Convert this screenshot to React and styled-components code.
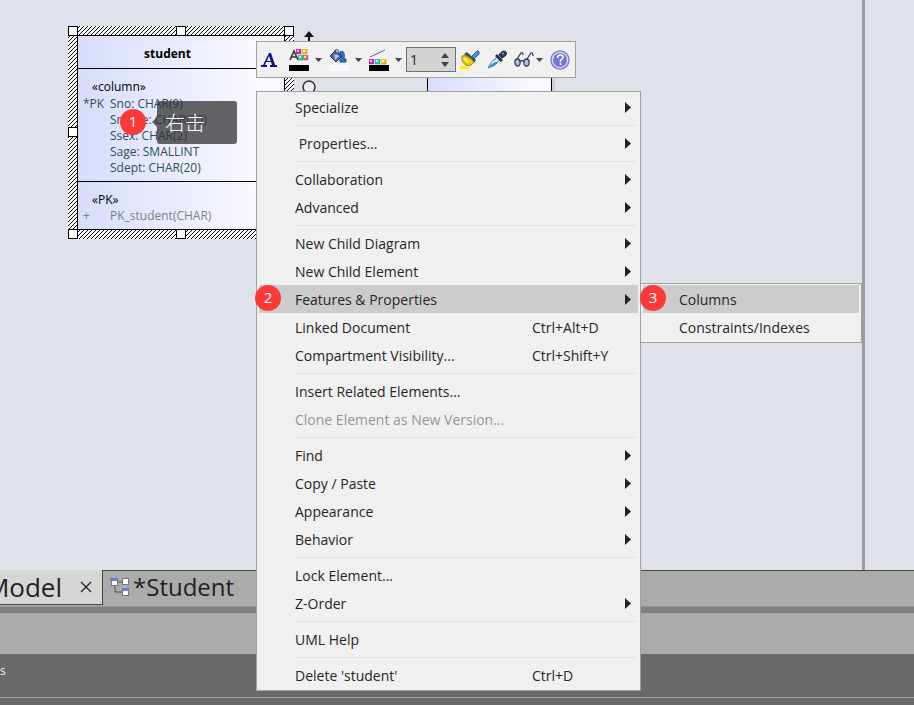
import React from "react";
import styled, { createGlobalStyle } from "styled-components";

const Global = createGlobalStyle`
  *, *::before, *::after { box-sizing: border-box; }
  html, body { margin: 0; }
  body { background: #6a6a6a; color: #222; font: 14px/20px "Open Sans", "Noto Sans", "Noto Sans CJK SC", sans-serif; }
  button, input { font: inherit; color: inherit; margin: 0; padding: 0; border: 0; background: none; }
  ul { margin: 0; padding: 0; list-style: none; }
`;

const Shell = styled.div`
  position: relative;
  min-height: 100vh;
  display: flex;
  flex-direction: column;
  overflow: hidden;
`;

const Workspace = styled.main`
  position: relative;
  flex: 1;
  display: grid;
  grid-template-columns: 1fr 3px 49px;
  background: #dfe2eb;
`;
const Splitter = styled.div`
  grid-column: 2;
  background: #9e9e9e;
`;

/* Diagram nodes */
const hatch = `url("data:image/svg+xml,%3Csvg xmlns='http://www.w3.org/2000/svg' width='4' height='4' shape-rendering='crispEdges'%3E%3Crect width='4' height='4' fill='%23fff'/%3E%3Cpath d='M3 0h1v1h-1zM2 1h1v1h-1zM1 2h1v1h-1zM0 3h1v1h-1z' fill='%23000'/%3E%3C/svg%3E")`;

const Selection = styled.section`
  position: absolute;
  left: 68px;
  top: 26px;
  width: 226px;
  padding: 9px;
  background: ${hatch};
`;
const Handle = styled.span`
  position: absolute;
  left: ${(p) => p.$x};
  top: ${(p) => p.$y};
  width: 10px;
  height: 10px;
  border: 1px solid #000;
  background: #fff;
`;
const Entity = styled.article`
  border: 1px solid #000;
  background: linear-gradient(90deg, #d8dcfb, #f8f8ff 85%);
  font-size: 12px;
  line-height: 16px;
  color: #2f4f4f;
`;
const EntityName = styled.h1`
  margin: 0;
  padding: 10px 27px 6px 0;
  font-size: 12px;
  line-height: 16px;
  text-align: center;
  color: #000;
`;
const Compartment = styled.section`
  border-top: 1px solid #000;
  padding: ${(p) => (p.$compact ? "9px 0 5px" : "9px 0 5px")};
`;
const Stereotype = styled.h2`
  margin: 0;
  padding-left: 14px;
  font-size: 12px;
  font-weight: 400;
  line-height: ${(p) => (p.$tall ? 18 : 17)}px;
  color: #000;
`;
const Member = styled.li`
  display: grid;
  grid-template-columns: 27px 1fr;
  padding-left: 5px;
  color: ${(p) => (p.$muted ? "#808080" : "inherit")};
`;
const NeighbourEntity = styled.div`
  position: absolute;
  left: 427px;
  top: 52px;
  width: 125px;
  height: 60px;
  border: 1px solid #000;
  background: linear-gradient(90deg, #d8dcfb, #f8f8ff 85%);
  box-shadow: 3px 3px 1px #cdd0da;
`;
const QuickLinks = styled.svg`
  position: absolute;
  left: 300px;
  top: 28px;
`;

/* Floating toolbar */
const Toolbar = styled.div`
  position: absolute;
  left: 256px;
  top: 41px;
  width: 320px;
  height: 37px;
  padding: 0 4px;
  border: 1px solid #a0a0a0;
  background: #f0f0f0;
  display: flex;
  align-items: center;
`;
const ToolButton = styled.button`
  flex: none;
  display: flex;
  align-items: center;
  gap: ${(p) => p.$gap || 6}px;
  margin-right: ${(p) => p.$after || 7}px;
  &:last-child { margin-right: 0; }
`;
const Stepper = styled.div`
  flex: none;
  width: 50px;
  height: 25px;
  margin-right: 4px;
  padding-left: 3px;
  border: 1px solid #707070;
  background: #d4d4d4;
  display: flex;
`;
const StepInput = styled.input`
  width: 31px;
  min-width: 0;
  outline: 0;
`;
const StepButtons = styled.div`
  display: grid;
  gap: 3px;
  align-content: center;
`;
const StepButton = styled.button`
  display: block;
  height: 6px;
  svg { display: block; }
`;

/* Menus */
const Menu = styled.div`
  position: absolute;
  left: ${(p) => p.$x}px;
  top: ${(p) => p.$y}px;
  width: ${(p) => p.$w}px;
  padding: 1px 2px;
  border: 1px solid #a0a0a0;
  background: #f0f0f0;
`;
const MenuItem = styled.button`
  display: grid;
  grid-template-columns: 1fr ${(p) => (p.$sub ? "" : "93px 6px")};
  align-items: center;
  width: 100%;
  height: 28px;
  padding: 0 7px 0 36px;
  line-height: 22px;
  text-align: left;
  white-space: pre;
  background: ${(p) => (p.$active ? "#cccccc" : "transparent")};
  color: ${(p) => (p.disabled ? "#969696" : "#262626")};
  span { padding-top: 1px; }
`;
const Divider = styled.hr`
  height: 1px;
  margin: 4px 3px 3px 37px;
  border: 0;
  background: #e0e0e0;
`;

/* Annotations */
const Step = styled.span`
  position: absolute;
  left: ${(p) => p.$x}px;
  top: ${(p) => p.$y}px;
  width: 26px;
  height: 26px;
  border-radius: 50%;
  background: #fc3939;
  color: #fff;
  font-size: 15px;
  line-height: 24px;
  text-align: center;
`;
const Callout = styled.div`
  position: absolute;
  left: 157px;
  top: 101px;
  width: 80px;
  padding: 8px;
  border-radius: 3px;
  background: rgba(48, 48, 50, 0.74);
  color: #fff;
  font-family: "Noto Sans CJK SC", sans-serif;
  font-weight: 300;
  font-size: 20px;
  line-height: 27px;
  &::before {
    content: "";
    position: absolute;
    left: -5px;
    top: 16px;
    border: solid transparent;
    border-width: 5px 5px 5px 0;
    border-right-color: rgba(48, 48, 50, 0.74);
  }
`;

/* Lower panels */
const TabBar = styled.nav`
  display: flex;
  height: 37px;
  background: #ababab;
  border-bottom: 1px solid #979797;
  line-height: 32px;
`;
const CurrentTab = styled.div`
  display: flex;
  justify-content: flex-end;
  align-items: center;
  width: 103px;
  height: 35px;
  padding-right: 10px;
  overflow: hidden;
  border: solid #484848;
  border-width: 0 1px 1px 0;
  background: #d6d6d6;
  font-size: 26px;
`;
const TabLabel = styled.button`
  flex: none;
  display: flex;
  align-items: center;
  gap: 3px;
`;
const CloseButton = styled.button`
  display: flex;
  margin-left: 18px;
`;
const TabRest = styled.div`
  flex: 1;
  display: flex;
  align-items: flex-start;
  padding-left: 7px;
  border-top: 1px solid #484848;
  font-size: 24px;
`;
const Band = styled.div`
  height: ${(p) => p.$h}px;
  background: ${(p) => p.$bg};
`;
const StatusPane = styled.footer`
  height: 51px;
  padding-top: 7px;
  background: #6a6a6a;
  color: #f4f4f4;
  font-size: 12px;
`;
const StatusLine = styled.div`
  height: 37px;
  border-bottom: 1px solid #a0a0a0;
`;

const Caret = () => (
  <svg width="7" height="4"><path d="M0 0h7L3.5 4z" fill="#444" /></svg>
);
const SubmenuArrow = () => (
  <svg width="6" height="11"><path d="M0 0L6 5.500L0 11z" fill="#222" /></svg>
);

function Swatches({ x, y, row }) {
  const cells = row
    ? [[0, 0, "#e020b0"], [6, 0, "#20c8c8"], [12, 0, "#f0c818"]]
    : [[0, 0, "#e020b0"], [6, 0, "#f0c818"], [2, 6, "#20c8a8"], [7, 6, "#f06078"]];
  return cells.map(([dx, dy, c]) => (
    <g key={`${dx}-${dy}`}>
      <rect x={x + dx} y={y + dy} width="5" height="5" fill={c} />
      <rect x={x + dx + 1} y={y + dy + 1} width="2" height="2" fill="#fff" opacity=".7" />
      <path d={`M${x + dx} ${y + dy + 5}h5v-5`} stroke="#444" fill="none" opacity=".3" />
    </g>
  ));
}

const FontIcon = () => (
  <svg width="17" height="16" viewBox="0 0 17 16">
    <path fillRule="evenodd" d="M8 1h2l4 12h2v2h-7v-2h2l-1-3H5l-1 3h2v2H0v-2h2zM8 4L5.800 9h4z" fill="#101080" />
  </svg>
);
const TextColorIcon = () => (
  <svg width="20" height="22" viewBox="0 0 20 22">
    <path d="M1 11L5 2l4 9M2.500 8h5" stroke="#333" strokeWidth="1.600" fill="none" />
    <Swatches x={7} y={0} />
    <rect y="16" width="20" height="6" fill="#000" />
  </svg>
);
const FillIcon = () => (
  <svg width="20" height="22" viewBox="0 0 20 22">
    <path d="M11 3c3-2 5 0 4 7h2v3h-6v-3h2z" fill="#2878c8" stroke="#1d4d94" />
    <path d="M6 2l7 5-6 6-6-6z" fill="#5268a8" stroke="#25305f" />
    <path d="M5 4l5 3-4 4z" fill="#b8c6eb" />
    <path d="M6 6V1q3-2 4 2v3" fill="none" stroke="#333b68" />
    <rect y="16" width="20" height="6" fill="#f8f8ff" />
  </svg>
);
const LineColorIcon = () => (
  <svg width="20" height="22" viewBox="0 0 20 22">
    <path d="M1 8L16 1" stroke="#6060a0" />
    <Swatches x={0} y={10} row />
    <rect y="16" width="20" height="6" fill="#000" />
  </svg>
);
const BrushIcon = () => (
  <svg width="20" height="20" viewBox="0 0 20 20">
    <path d="M12 6l5-5q3 0 2 3l-5 5z" fill="#4498e0" stroke="#2860a0" />
    <path d="M7 2l9 8-2 3L4 4z" fill="#42526e" />
    <path d="M2 6q5-2 12 6-3 5-8 3Q1 12 2 6z" fill="#e8d010" stroke="#a17a10" />
    <path d="M4 8l4 4" stroke="#fff36a" strokeWidth="2" />
    <path d="M0 19v-3h7l3 1-2 2z" fill="#fff000" />
  </svg>
);
const DropperIcon = () => (
  <svg width="20" height="20" viewBox="0 0 20 20">
    <path d="M1 18q2-6 9-11l3 3Q7 16 1 18z" fill="#c8edf5" stroke="#3982a4" />
    <path d="M2 18q2-4 6-6l3 1q-4 4-9 5z" fill="#2a91bb" />
    <path d="M10 4l6 6-2 2-6-6z" fill="#26304f" />
    <path d="M12 5q4-6 7-3 2 3-4 6z" fill="#303b68" stroke="#1c2445" />
    <path d="M15 4l2-1" stroke="#cbd6ee" />
  </svg>
);
const GlassesIcon = () => (
  <svg width="20" height="15" viewBox="0 0 20 15" fill="none" stroke="#383c60" strokeWidth="1.300">
    <ellipse cx="3.500" cy="10.500" rx="2.600" ry="3.500" fill="#adc4e8" />
    <ellipse cx="12.500" cy="10.500" rx="2.600" ry="3.500" fill="#adc4e8" />
    <path d="M6 10q2-3 4 0M3 7l4-6q2-1 2 2M13 7l4-6q2-1 2 3" />
  </svg>
);
const HelpIcon = () => (
  <svg width="20" height="20" viewBox="0 0 20 20">
    <circle cx="10" cy="10" r="9" fill="#dfe0fa" stroke="#8180c8" strokeWidth="1.500" />
    <circle cx="10" cy="10" r="7" fill="#7476c6" />
    <path d="M7.500 8q0-3 3-3 2.500 0 2.500 2.500Q13 9 10.500 10v2" fill="none" stroke="#fff" strokeWidth="1.500" />
    <circle cx="10.500" cy="14" r="1" fill="#fff" />
  </svg>
);
const DiagramIcon = () => (
  <svg width="20" height="20" viewBox="0 0 20 20">
    <path d="M5 7v8h8M7 5h6" fill="none" stroke="#505050" />
    <g fill="#fff" stroke="#777">
      <rect x="1.500" y="1.500" width="6" height="7" />
      <rect x="12.500" y="1.500" width="6" height="6" />
      <rect x="12.500" y="11.500" width="6" height="7" />
    </g>
    <path d="M0 1h8v3H0zM12 11h7v3h-7z" fill="#5f82cc" />
  </svg>
);

const columns = [["*PK", "Sno: CHAR(9)"], ["", "Sname: CHAR(20)"], ["", "Ssex: CHAR(2)"], ["", "Sage: SMALLINT"], ["", "Sdept: CHAR(20)"]];

const handles = [
  ["0", "0"], ["108px", "0"], ["216px", "0"],
  ["0", "101px"], ["216px", "101px"],
  ["0", "calc(100% - 10px)"], ["108px", "calc(100% - 10px)"], ["216px", "calc(100% - 10px)"],
];

const groups = [
  [{ label: "Specialize", more: true }],
  [{ label: " Properties...", more: true }],
  [{ label: "Collaboration", more: true }, { label: "Advanced", more: true }],
  [
    { label: "New Child Diagram", more: true },
    { label: "New Child Element", more: true },
    { label: "Features & Properties", more: true, active: true },
    { label: "Linked Document", keys: "Ctrl+Alt+D" },
    { label: "Compartment Visibility...", keys: "Ctrl+Shift+Y" },
  ],
  [{ label: "Insert Related Elements..." }, { label: "Clone Element as New Version...", disabled: true }],
  [{ label: "Find", more: true }, { label: "Copy / Paste", more: true }, { label: "Appearance", more: true }, { label: "Behavior", more: true }],
  [{ label: "Lock Element..." }, { label: "Z-Order", more: true }],
  [{ label: "UML Help" }],
  [{ label: "Delete 'student'", keys: "Ctrl+D" }],
];

export default function App() {
  return (
    <Shell>
      <Global />
      <Workspace>
        <Splitter />
        <NeighbourEntity />
        <Selection>
          <Entity>
            <EntityName>student</EntityName>
            <Compartment>
              <Stereotype $tall>«column»</Stereotype>
              <ul>
                {columns.map(([key, text]) => (
                  <Member key={text}><span>{key}</span><span>{text}</span></Member>
                ))}
              </ul>
            </Compartment>
            <Compartment>
              <Stereotype>«PK»</Stereotype>
              <ul><Member $muted><span>+</span><span>PK_student(CHAR)</span></Member></ul>
            </Compartment>
          </Entity>
          {handles.map(([x, y]) => <Handle key={x + y} $x={x} $y={y} />)}
        </Selection>
        <QuickLinks width="18" height="68" viewBox="0 0 18 68">
          <path d="M9 3l5 6H4z" fill="#111" />
          <path d="M9 7v10" stroke="#111" strokeWidth="2" />
          <circle cx="9" cy="59" r="6" fill="#eee" stroke="#333" strokeWidth="1.500" />
        </QuickLinks>
        <Callout>右击</Callout>
        <Toolbar role="toolbar" aria-label="Element appearance">
          <ToolButton $after={11} aria-label="Font"><FontIcon /></ToolButton>
          <ToolButton aria-label="Text color"><TextColorIcon /><Caret /></ToolButton>
          <ToolButton aria-label="Fill color"><FillIcon /><Caret /></ToolButton>
          <ToolButton $after={4} aria-label="Line color"><LineColorIcon /><Caret /></ToolButton>
          <Stepper>
            <StepInput aria-label="Line width" defaultValue="1" />
            <StepButtons>
              <StepButton aria-label="Increase"><svg width="8" height="5"><path d="M0 5h8L4 0z" fill="#444" /></svg></StepButton>
              <StepButton aria-label="Decrease"><svg width="8" height="5"><path d="M0 0h8L4 5z" fill="#444" /></svg></StepButton>
            </StepButtons>
          </Stepper>
          <ToolButton aria-label="Apply style"><BrushIcon /></ToolButton>
          <ToolButton aria-label="Pick style"><DropperIcon /></ToolButton>
          <ToolButton $gap={2} aria-label="View"><GlassesIcon /><Caret /></ToolButton>
          <ToolButton aria-label="Help"><HelpIcon /></ToolButton>
        </Toolbar>
        <Menu role="menu" $x={256} $y={91} $w={385}>
          {groups.map((group, i) => (
            <React.Fragment key={group[0].label}>
              {i > 0 && <Divider />}
              {group.map((item) => (
                <MenuItem key={item.label} role="menuitem" $active={item.active} disabled={item.disabled}>
                  <span>{item.label}</span>
                  <span>{item.keys}</span>
                  {item.more && <SubmenuArrow />}
                </MenuItem>
              ))}
            </React.Fragment>
          ))}
        </Menu>
        <Menu role="menu" $x={640} $y={283} $w={222}>
          <MenuItem role="menuitem" $sub $active><span>Columns</span></MenuItem>
          <MenuItem role="menuitem" $sub><span>Constraints/Indexes</span></MenuItem>
        </Menu>
        <Step $x={120} $y={109}>1</Step>
        <Step $x={255} $y={285}>2</Step>
        <Step $x={640} $y={285}>3</Step>
      </Workspace>
      <TabBar>
        <CurrentTab>
          <TabLabel>Model</TabLabel>
          <CloseButton aria-label="Close Model">
            <svg width="12" height="12"><path d="M1 1l10 10M11 1L1 11" stroke="#222" strokeWidth="1.300" /></svg>
          </CloseButton>
        </CurrentTab>
        <TabRest><TabLabel><DiagramIcon />*Student</TabLabel></TabRest>
      </TabBar>
      <Band $h={6} $bg="#808080" />
      <Band $h={41} $bg="#ababab" />
      <StatusPane><StatusLine>s</StatusLine></StatusPane>
    </Shell>
  );
}
